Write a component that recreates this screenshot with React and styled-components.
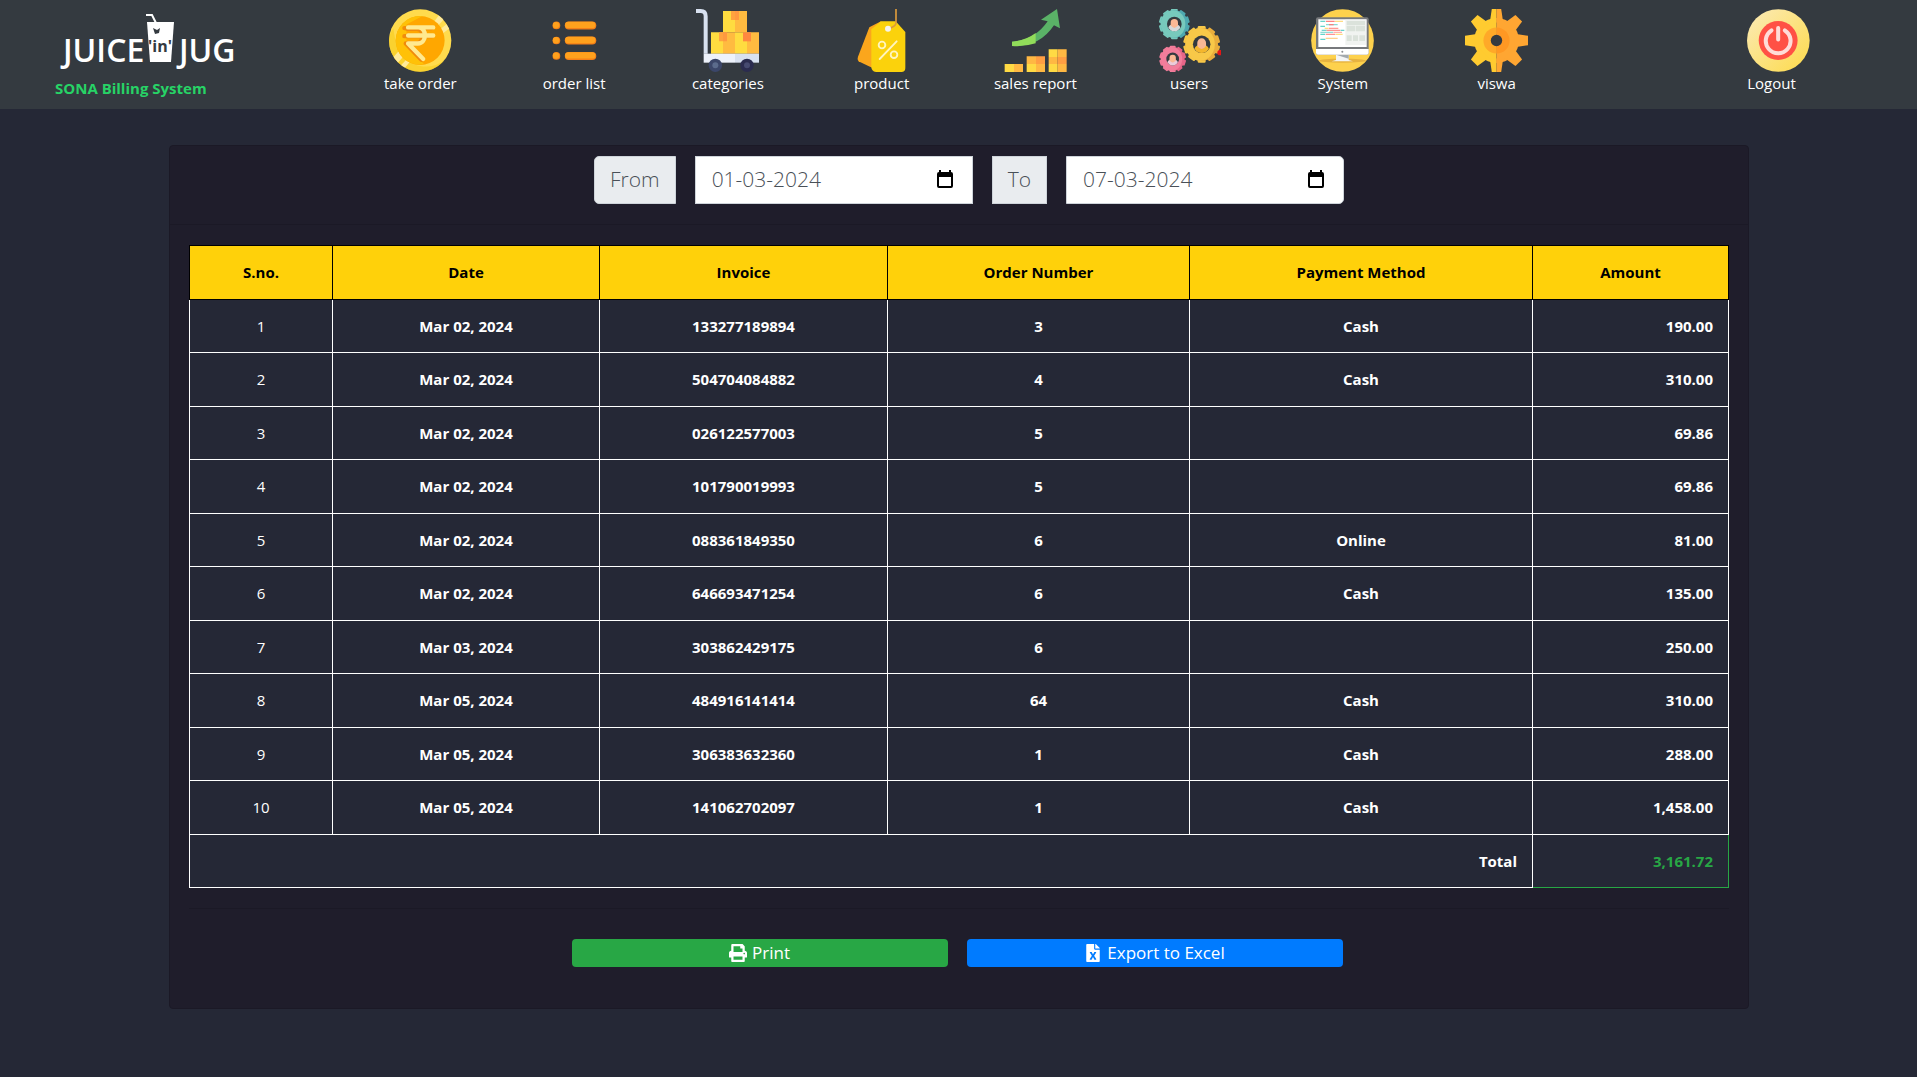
import React, { useState } from "react";
import styled, { createGlobalStyle } from "styled-components";
import { FaPrint, FaFileExcel } from "react-icons/fa";

const colors = {
  bar: "#343a40",
  page: "#252836",
  card: "#1f1d2b",
  line: "#1b1926",
  yellow: "#ffd10a",
  green: "#28a745",
  blue: "#007bff",
  brand: "#27d366",
};

const GlobalStyle = createGlobalStyle`
  *, *::before, *::after { box-sizing: border-box; }
  body {
    margin: 0;
    min-height: 100vh;
    background: ${colors.page};
    color: #fff;
    font-family: "Open Sans", "Noto Sans", sans-serif;
    font-size: 15px;
    line-height: 1.5;
  }
`;

const TopBar = styled.header`
  display: grid;
  grid-template-columns: repeat(12, 1fr);
  padding: 9px 36px;
  height: 109px;
  background: ${colors.bar};
`;

const Brand = styled.a`
  grid-column: span 2;
  display: flex;
  flex-direction: column;
  padding: 4px 19px 0;
  color: ${colors.brand};
  font-weight: 700;
  line-height: 22px;
  text-decoration: none;
`;

const LogoArt = styled.svg`
  display: block;
  width: 190px;
  height: 64px;
`;

const Menu = styled.nav`
  grid-column: span 8;
  display: grid;
  grid-template-columns: repeat(8, 1fr);
`;

const NavLink = styled.a`
  display: flex;
  flex-direction: column;
  align-items: ${(p) => (p.$start ? "flex-start" : "center")};
  padding: ${(p) => (p.$start ? "0 20px" : "0")};
  grid-column: ${(p) => (p.$start ? "12" : "auto")};
  color: #fff;
  line-height: 22px;
  white-space: nowrap;
  text-decoration: none;
`;

const Icon = styled.svg`
  display: block;
  width: 63px;
  height: 63px;
`;

const Main = styled.main`
  padding: 36px 168px 36px 169px;
`;

const Card = styled.section`
  background: ${colors.card};
  border: 1px solid ${colors.line};
  border-radius: 4px;
`;

const Filters = styled.form`
  display: flex;
  justify-content: center;
  gap: 19px;
  padding: 10px 0 20px 20px;
  border-bottom: 1px solid ${colors.line};
  color: #495057;
  font-size: 21px;
  font-weight: 300;
`;

const FieldLabel = styled.label`
  display: flex;
  align-items: center;
  height: 48px;
  padding: 0 15px;
  background: #e9ecef;
  border: 1px solid #ced4da;
  border-radius: ${(p) => (p.$first ? "5px 0 0 5px" : "0")};
`;

const DateField = styled.div`
  display: flex;
  align-items: center;
  width: 278px;
  height: 48px;
  padding: 0 18px 0 16px;
  background: #fff;
  border: 1px solid #ced4da;
  border-radius: ${(p) => (p.$last ? "0 5px 5px 0" : "0")};
`;

const DateInput = styled.input`
  flex: 1;
  min-width: 0;
  padding: 0;
  border: 0;
  outline: 0;
  background: transparent;
  color: inherit;
  font: inherit;
`;

const PickerButton = styled.button`
  display: flex;
  padding: 0;
  border: 0;
  background: transparent;
  cursor: pointer;
`;

const CardBody = styled.div`
  padding: 20px 19px 41px;
`;

const Table = styled.table`
  width: 100%;
  table-layout: fixed;
  border-collapse: collapse;
  background: ${colors.page};
`;

const HeadCell = styled.th`
  padding: 15px;
  border: 1px solid #000;
  background: ${colors.yellow};
  color: #000;
  font-weight: 700;
`;

const Cell = styled.td`
  padding: 15px;
  border: 1px solid ${(p) => (p.$total ? colors.green : "#fff")};
  color: ${(p) => (p.$total ? colors.green : "#fff")};
  font-weight: ${(p) => (p.$plain ? 400 : 700)};
  text-align: ${(p) => (p.$right ? "right" : "center")};
`;

const Actions = styled.div`
  display: flex;
  justify-content: center;
  gap: 19px;
  margin-top: 20px;
  padding: 30px 4px 0 0;
  border-top: 1px solid ${colors.line};
`;

const ActionButton = styled.button`
  display: flex;
  align-items: center;
  justify-content: center;
  gap: 5px;
  width: 376px;
  height: 28px;
  padding: 0;
  border: 0;
  border-radius: 4px;
  background: ${(p) => p.$color};
  color: #fff;
  font: inherit;
  font-size: 17px;
  line-height: 28px;
  cursor: pointer;

  svg {
    height: 18px;
  }
`;

function Logo() {
  return (
    <LogoArt viewBox="0 0 190 64" role="img" aria-label="Juice in Jug">
      <g fill="#fff" fontFamily='"Open Sans", sans-serif' fontWeight="600">
        <text x="8" y="49" fontSize="32">JUICE</text>
        <text x="124" y="49" fontSize="32">JUG</text>
      </g>
      <path d="M91 2h6l4 8" fill="none" stroke="#fff" strokeWidth="2" />
      <path d="M92 9h27l-3 40H95z" fill="#fff" />
      <text x="105" y="39" fill={colors.bar} fontFamily='"Open Sans", sans-serif' fontWeight="700" fontSize="16" textAnchor="middle">'in'</text>
      <path d="M98 15l4 2 3-2-1 5-4 1z" fill={colors.bar} />
    </LogoArt>
  );
}

function CoinIcon() {
  return (
    <Icon viewBox="60 27 188 188" aria-hidden="true">
      <defs><clipPath id="coin"><circle cx="153" cy="121" r="93" /></clipPath></defs>
      <circle cx="153" cy="121" r="93" fill="#ffdb4d" />
      <path d="M60 121a93 93 0 0 0 165 59c-50 40-140 20-152-95-8 10-13 22-13 36z" fill="#f8cf22" opacity=".7" />
      <g clipPath="url(#coin)" fill="#ffea99">
        <path d="M190 72l30-42 15 15-32 36zM207 92l38-30 6 15-38 28zM60 185l38-42 15 14-38 44zM88 203l34-36 7 9-31 38z" />
      </g>
      <circle cx="153" cy="121" r="73" fill="#ffa700" />
      <path d="M104 67a73 73 0 0 0 0 108A73 73 0 0 0 165 192L112 138V73l48-25c-22-2-40 4-56 19z" fill="#ffc107" />
      <path d="M112 82h81M112 106h81M120 84h30c22 2 22 43-4 44h-30l46 48" transform="translate(-6 2)" fill="none" stroke="#f08b0c" strokeWidth="13" strokeLinecap="round" strokeLinejoin="round" />
      <path d="M117 82h75M117 106h75M128 82h20c26 0 26 48-2 48h-29l45 46" fill="none" stroke="#ffe98f" strokeWidth="13" strokeLinecap="round" strokeLinejoin="round" />
    </Icon>
  );
}

function ListIcon() {
  return (
    <Icon viewBox="520 27 188 188" aria-hidden="true">
      {[76, 121, 167].map((y) => (
        <g key={y}>
          <circle cx="560" cy={y} r="11.5" fill="#f57f17" />
          <circle cx="559" cy={y - 1} r="9.5" fill="#ffa11d" />
          <rect x="585" y={y - 12} width="94" height="24" rx="12" fill="#f57f17" />
          <rect x="586" y={y - 11} width="90" height="19" rx="9.5" fill="#ffa11d" />
        </g>
      ))}
    </Icon>
  );
}

function TrolleyIcon() {
  return (
    <Icon viewBox="51 27 189 189" aria-hidden="true">
      <path d="M51 33h14q15 0 15 16v112" fill="none" stroke="#d8e1f0" strokeWidth="12" />
      <path d="M132 33h36v64h-36zM96 97h36v64H96zM168 97h36v64h-36z" fill="#ffdc40" />
      <path d="M168 33h36v64h-36zM132 97h36v64h-36zM204 97h36v64h-36z" fill="#ffbb40" />
      <path d="M156 33h12v27h-12zM120 97h12v27h-12z" fill="#ffa33f" />
      <path d="M168 33h12v27h-12zM132 97h12v27h-12z" fill="#ff9940" />
      <path d="M192 97h24v27h-24z" fill="#ff8840" />
      <path d="M74 161h94v27H74z" fill="#edf2fb" />
      <path d="M168 161h72v27h-72z" fill="#d8e1f0" />
      <circle cx="109" cy="196" r="20" fill="#3b4669" />
      <circle cx="204" cy="196" r="20" fill="#2b2c4f" />
      <circle cx="109" cy="196" r="9" fill="#5b6b8c" />
      <circle cx="204" cy="196" r="9" fill="#464a70" />
    </Icon>
  );
}

function TagIcon() {
  return (
    <Icon viewBox="512 27 189 189" aria-hidden="true">
      <path d="M570 82l35-18v152l-63-30q-10-5-6-16z" fill="#fba61c" />
      <path d="M605 64h44l29 32v108q0 12-12 12h-76q-14-3-14-16V88z" fill="#fbd20c" />
      <path d="M650 27v42q0 9-22 17" fill="none" stroke="#dc9a3c" strokeWidth="5" />
      <circle cx="626" cy="86" r="9" fill="#f5f3ee" />
      <g fill="none" stroke="#fff5c0" strokeWidth="5.5" strokeLinecap="round">
        <circle cx="608" cy="135" r="10" />
        <circle cx="644" cy="164" r="10" />
        <path d="M652 124l-51 53" />
      </g>
    </Icon>
  );
}

function ReportIcon() {
  return (
    <Icon viewBox="73 27 189 189" aria-hidden="true">
      <path d="M97 125q68-4 107-61l-20-5 48-32 9 58-18-9q-44 66-126 62z" fill="#5ab267" />
      <path d="M97 125q40-3 71-26v31q-34 11-71 8z" fill="#91dc5a" />
      <path d="M75 192h28v24H75zM141 192h28v24h-28zM207 148h27v23h-27zM207 192h27v24h-27z" fill="#ffda44" />
      <path d="M103 192h27v24h-27zM141 169h28v23h-28zM169 192h27v24h-27zM234 148h27v23h-27zM207 171h27v21h-27zM234 192h27v24h-27z" fill="#ffb843" />
      <path d="M169 169h27v23h-27zM234 171h27v21h-27z" fill="#ff9e43" />
    </Icon>
  );
}

function PersonGear({ cx, cy, r, color, shade, shirt }) {
  const teeth = Array.from({ length: 10 }, (_, i) => i * 36);
  return (
    <g transform={`translate(${cx} ${cy}) scale(${r / 46})`}>
      {teeth.map((a) => (
        <rect key={a} x="-10" y="-46" width="20" height="16" rx="3" fill={a > 0 && a < 180 ? shade : color} transform={`rotate(${a})`} />
      ))}
      <circle r="41" fill={shade} />
      <ellipse cx="-4" rx="37" ry="41" fill={color} />
      <circle r="22" fill={colors.bar} />
      <path d="M-18 11q3-10 18-10t18 10Q11 22 0 22t-18-11z" fill={shirt} />
      <path d="M-11-4a11 11 0 0 1 22 0v8Q5 12 0 12T-11 4z" fill="#fab894" />
    </g>
  );
}

function UsersIcon() {
  return (
    <Icon viewBox="534 27 189 189" aria-hidden="true">
      <PersonGear cx={583} cy={72} r={46} color="#77c9bc" shade="#4fa9b0" shirt="#d5d9da" />
      <PersonGear cx={578} cy={177} r={40} color="#f27d9b" shade="#e76588" shirt="#ecccdb" />
      <PersonGear cx={665} cy={133} r={55} color="#f8c848" shade="#eaae3c" shirt="#f4b62d" />
      <circle cx="720" cy="158" r="8" fill="#e51616" />
    </Icon>
  );
}

const codeLines = [
  [94, 64, 15, "#5fd0c5"], [111, 64, 26, "#ff7777"], [138, 64, 24, "#ffd979"],
  [94, 79, 14, "#55cfc6"], [111, 74, 35, "#80d8d0"], [120, 74, 14, "#ff7777"],
  [107, 85, 12, "#ffd979"], [120, 85, 28, "#ff9189"], [98, 91, 15, "#66d0c9"],
  [113, 91, 41, "#fb8b87"], [155, 91, 11, "#55cfc6"], [94, 97, 38, "#88d7d2"],
  [133, 97, 26, "#ffaaa3"], [94, 103, 14, "#55cfc6"], [110, 103, 28, "#ff8888"],
  [139, 103, 22, "#ffd979"], [94, 118, 15, "#55cfc6"], [110, 115, 36, "#ffcb83"],
];

function SystemIcon() {
  return (
    <Icon viewBox="66 27 189 189" aria-hidden="true">
      <circle cx="160.5" cy="121.5" r="94" fill="#fdd14d" />
      <ellipse cx="160" cy="182" rx="71" ry="6" fill="#e7b340" />
      <path d="M141 163h38v17l13 4h-64l13-4z" fill="#f4f5f5" />
      <path d="M141 164h38v12z" fill="#a3a9ad" />
      <rect x="81" y="52" width="158" height="112" rx="6" fill="#77797c" />
      <path d="M81 147h158v11q0 6-6 6H87q-6 0-6-6z" fill="#fff" />
      <path d="M88 58h145v83H88z" fill="#fff" />
      <path d="M169 59h62v76h-62z" fill="#f1f3f1" />
      <path d="M173 63h55v12h-55zM173 77h26v17h-26zM201 77h27v17h-27zM173 106h15v17h-15zM192 106h15v17h-15zM211 106h17v17h-17z" fill="#dbe2db" />
      {codeLines.map(([x, y, w, c]) => (
        <path key={`${x}-${y}`} d={`M${x} ${y}h${w}`} stroke={c} strokeWidth="3.5" />
      ))}
      <circle cx="160" cy="155" r="3" fill="#8b8d8f" />
    </Icon>
  );
}

function GearIcon() {
  const shape = (
    <>
      <circle cx="621" cy="121" r="67" />
      {[0, 45, 90, 135, 180, 225, 270, 315].map((a) => (
        <path key={a} d="M607 27h28l6 40h-40z" transform={`rotate(${a} 621 121)`} />
      ))}
    </>
  );
  return (
    <Icon viewBox="527 27 188 188" aria-hidden="true">
      <defs>
        <clipPath id="gear-left"><path d="M520 20h101v200H520z" /></clipPath>
        <clipPath id="gear-right"><path d="M621 20h101v200H621z" /></clipPath>
      </defs>
      <g clipPath="url(#gear-left)" fill="#ffcb30">{shape}<circle cx="621" cy="121" r="39" fill="#ffa928" /></g>
      <g clipPath="url(#gear-right)" fill="#ffa632">{shape}<circle cx="621" cy="121" r="39" fill="#ff9823" /></g>
      <circle cx="621" cy="121" r="17" fill={colors.bar} />
    </Icon>
  );
}

function PowerIcon() {
  return (
    <Icon viewBox="111 27 188 188" aria-hidden="true">
      <defs>
        <linearGradient id="power" x1="0" y1="0" x2="1" y2="1">
          <stop offset=".1" stopColor="#fbe9ad" />
          <stop offset=".9" stopColor="#fddc55" />
        </linearGradient>
      </defs>
      <circle cx="204.500" cy="121" r="93.500" fill="url(#power)" />
      <circle cx="204" cy="121" r="58" fill="#ff5145" />
      <path d="M184 91a37 37 0 1 0 40 0M204 84v34" fill="none" stroke="#ffdcd8" strokeWidth="12" strokeLinecap="round" />
    </Icon>
  );
}

function CalendarIcon() {
  return (
    <svg width="18" height="20" viewBox="0 0 18 20" aria-hidden="true">
      <path d="M3 0h2v2h8V0h2v2q2 0 2 2v12q0 2-2 2H3q-2 0-2-2V4q0-2 2-2zM3 7v9h12V7z" fill="#000" fillRule="evenodd" />
    </svg>
  );
}

const menu = [
  ["take order", CoinIcon],
  ["order list", ListIcon],
  ["categories", TrolleyIcon],
  ["product", TagIcon],
  ["sales report", ReportIcon],
  ["users", UsersIcon],
  ["System", SystemIcon],
  ["viswa", GearIcon],
];

const columns = [
  ["S.no.", 143],
  ["Date", 267],
  ["Invoice", 288],
  ["Order Number", 302],
  ["Payment Method", 343],
  ["Amount", 196],
];

const sales = [
  ["Mar 02, 2024", "133277189894", "3", "Cash", "190.00"],
  ["Mar 02, 2024", "504704084882", "4", "Cash", "310.00"],
  ["Mar 02, 2024", "026122577003", "5", "", "69.86"],
  ["Mar 02, 2024", "101790019993", "5", "", "69.86"],
  ["Mar 02, 2024", "088361849350", "6", "Online", "81.00"],
  ["Mar 02, 2024", "646693471254", "6", "Cash", "135.00"],
  ["Mar 03, 2024", "303862429175", "6", "", "250.00"],
  ["Mar 05, 2024", "484916141414", "64", "Cash", "310.00"],
  ["Mar 05, 2024", "306383632360", "1", "Cash", "288.00"],
  ["Mar 05, 2024", "141062702097", "1", "Cash", "1,458.00"],
];

function DateBox({ id, initial, last, pickerLabel }) {
  const [value, setValue] = useState(initial);
  return (
    <DateField $last={last}>
      <DateInput id={id} value={value} onChange={(e) => setValue(e.target.value)} />
      <PickerButton type="button" aria-label={pickerLabel}><CalendarIcon /></PickerButton>
    </DateField>
  );
}

export default function App() {
  return (
    <>
      <GlobalStyle />
      <TopBar>
        <Brand href="#home">
          <Logo />
          <span>SONA Billing System</span>
        </Brand>
        <Menu>
          {menu.map(([label, Art]) => (
            <NavLink key={label} href={`#${label.replace(" ", "-")}`}>
              <Art />
              <span>{label}</span>
            </NavLink>
          ))}
        </Menu>
        <NavLink $start href="#logout">
          <PowerIcon />
          <span>Logout</span>
        </NavLink>
      </TopBar>
      <Main>
        <Card>
          <Filters>
            <FieldLabel $first htmlFor="from">From</FieldLabel>
            <DateBox id="from" initial="01-03-2024" pickerLabel="Pick start date" />
            <FieldLabel htmlFor="to">To</FieldLabel>
            <DateBox id="to" initial="07-03-2024" last pickerLabel="Pick end date" />
          </Filters>
          <CardBody>
            <Table>
              <colgroup>
                {columns.map(([name, width]) => <col key={name} width={width} />)}
              </colgroup>
              <thead>
                <tr>{columns.map(([name]) => <HeadCell key={name} scope="col">{name}</HeadCell>)}</tr>
              </thead>
              <tbody>
                {sales.map(([date, invoice, order, method, amount], i) => (
                  <tr key={invoice}>
                    <Cell $plain>{i + 1}</Cell>
                    <Cell>{date}</Cell>
                    <Cell>{invoice}</Cell>
                    <Cell>{order}</Cell>
                    <Cell>{method}</Cell>
                    <Cell $right>{amount}</Cell>
                  </tr>
                ))}
              </tbody>
              <tfoot>
                <tr>
                  <Cell $right colSpan={5}>Total</Cell>
                  <Cell $right $total>3,161.72</Cell>
                </tr>
              </tfoot>
            </Table>
            <Actions>
              <ActionButton type="button" $color={colors.green}><FaPrint size={18} />Print</ActionButton>
              <ActionButton type="button" $color={colors.blue}><FaFileExcel size={18} />Export to Excel</ActionButton>
            </Actions>
          </CardBody>
        </Card>
      </Main>
    </>
  );
}
